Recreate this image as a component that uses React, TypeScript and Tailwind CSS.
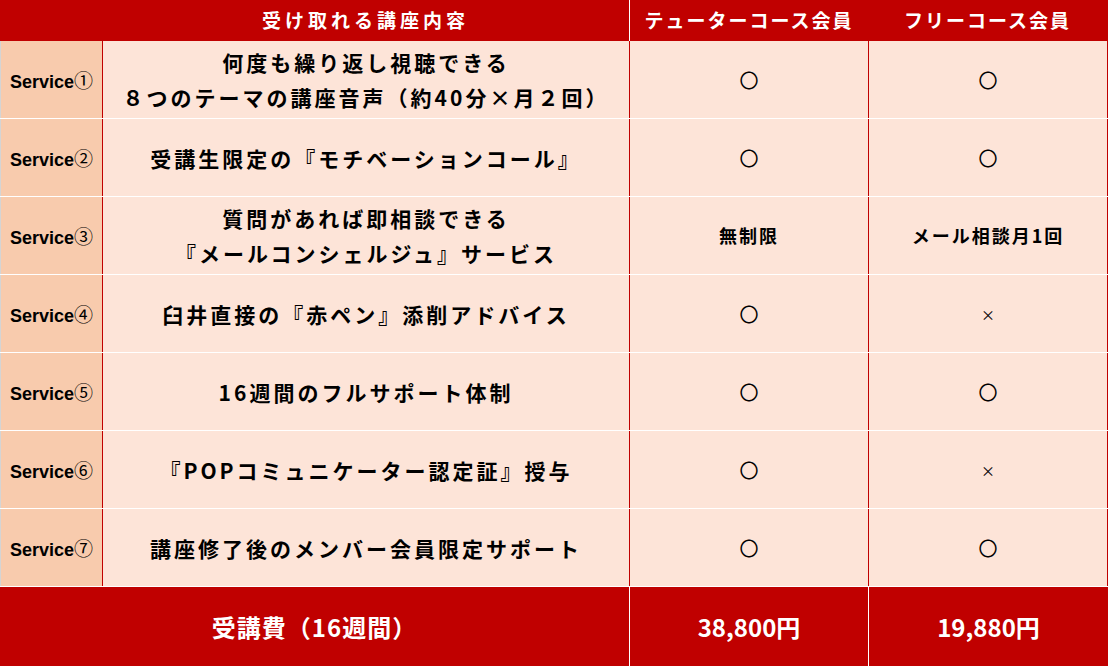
import React from "react";

const rows: { no: string; lines: string[]; tutor: string; free: string }[] = [
  { no: "①", lines: ["何度も繰り返し視聴できる", "８つのテーマの講座音声（約40分×月２回）"], tutor: "〇", free: "〇" },
  { no: "②", lines: ["受講生限定の『モチベーションコール』"], tutor: "〇", free: "〇" },
  { no: "③", lines: ["質問があれば即相談できる", "『メールコンシェルジュ』サービス"], tutor: "無制限", free: "メール相談月1回" },
  { no: "④", lines: ["臼井直接の『赤ペン』添削アドバイス"], tutor: "〇", free: "×" },
  { no: "⑤", lines: ["16週間のフルサポート体制"], tutor: "〇", free: "〇" },
  { no: "⑥", lines: ["『POPコミュニケーター認定証』授与"], tutor: "〇", free: "×" },
  { no: "⑦", lines: ["講座修了後のメンバー会員限定サポート"], tutor: "〇", free: "〇" },
];

const jp = "font-['Noto_Sans_CJK_JP',sans-serif]";

const Mark = ({ v }: { v: string }) => {
  if (v === "〇") return <span className="text-[19px] font-normal leading-none text-black">〇</span>;
  if (v === "×") return <span className="text-[14px] font-normal leading-none text-black">×</span>;
  return <span className="text-[18px] font-bold tracking-[2px] text-black">{v}</span>;
};

export default function App() {
  return (
    <div className={`w-[1108px] h-[666px] bg-white ${jp}`}>
      {/* header */}
      <div className="flex h-[41px] bg-[#c00000] text-white font-bold text-[19px]">
        <div className="w-[629px] flex items-center pl-[102px]">
          <div className="flex-1 text-center tracking-[4px]">受け取れる講座内容</div>
        </div>
        <div className="w-[239px] border-l border-white flex items-center justify-center tracking-[2px]">
          テューターコース会員
        </div>
        <div className="flex-1 flex items-center justify-center tracking-[2px] border-r border-[#c00000]">
          フリーコース会員
        </div>
      </div>

      {/* body */}
      {rows.map((r) => (
        <div key={r.no} className="flex h-[78px] border-b border-white bg-[#fde4d8]">
          <div className="w-[103px] bg-[#f8cbad] border-l border-[#d4d4d4] border-r border-r-[#c00000] flex items-center justify-center text-black">
            <span className="leading-[24px] pt-[3px]">
              <span className="font-['Liberation_Sans',sans-serif] font-bold text-[18px]">Service</span>
              <span className="text-[19px] font-normal">{r.no}</span>
            </span>
          </div>
          <div className="w-[527px] border-r border-[#c00000] flex flex-col items-center justify-center gap-[7px] text-[21px] font-bold leading-[28px] tracking-[3px] text-black">
            {r.lines.map((l) => (
              <div key={l}>{l}</div>
            ))}
          </div>
          <div className="w-[239px] border-r border-[#c00000] flex items-center justify-center">
            <Mark v={r.tutor} />
          </div>
          <div className="flex-1 border-r border-[#c00000] flex items-center justify-center">
            <Mark v={r.free} />
          </div>
        </div>
      ))}

      {/* footer */}
      <div className="flex h-[79px] bg-[#c00000] text-white font-bold">
        <div className="w-[629px] flex items-center justify-center text-[24px] tracking-[1px]">受講費（16週間）</div>
        <div className="w-[239px] border-l border-white flex items-center justify-center text-[24px]">38,800円</div>
        <div className="flex-1 border-l border-white flex items-center justify-center text-[24px]">19,880円</div>
      </div>
    </div>
  );
}
